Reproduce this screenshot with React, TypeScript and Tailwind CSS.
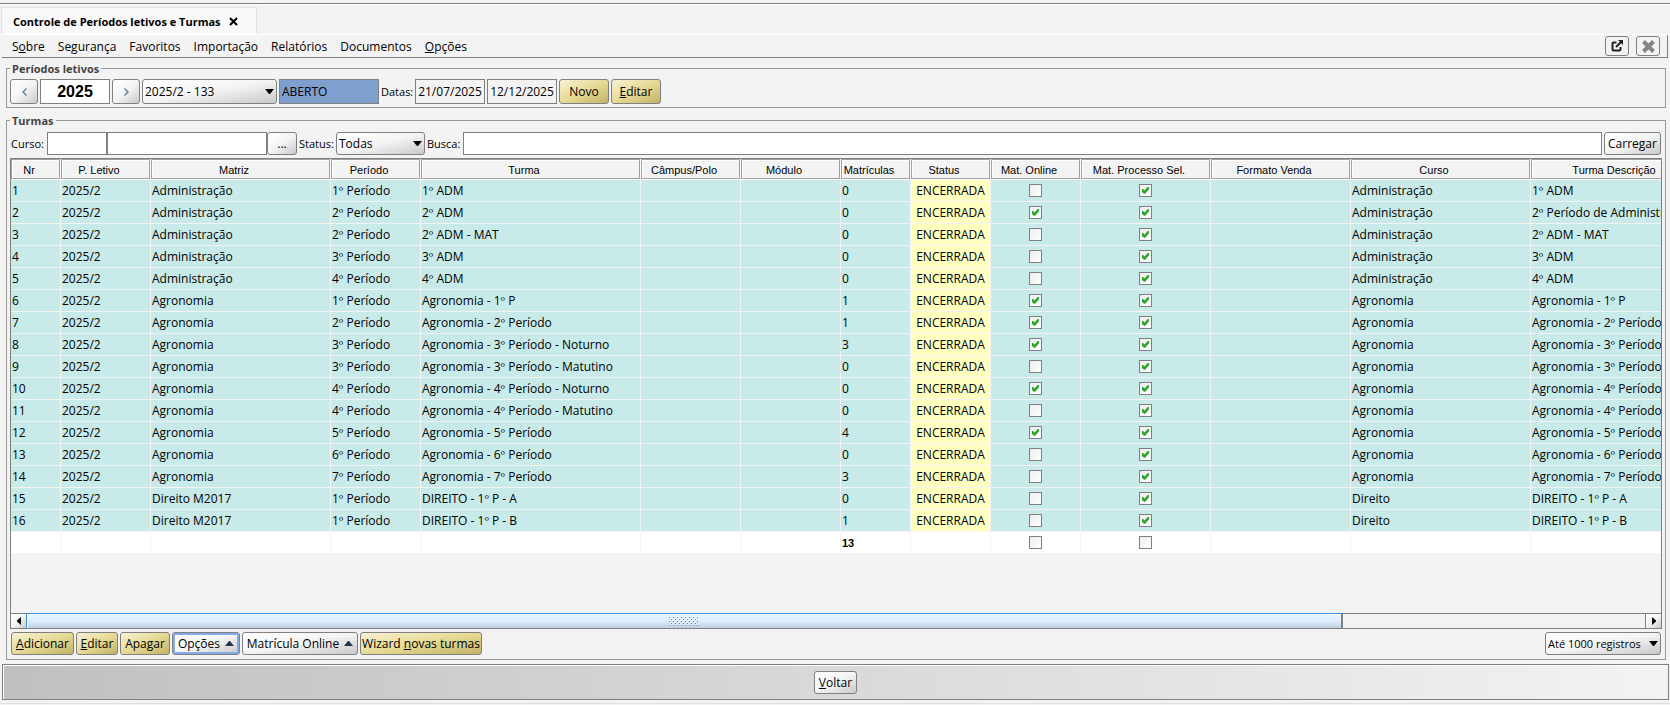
import type { ReactNode } from "react";

const MENU: [string, string, string][] = [
  ["S", "o", "bre"],
  ["Segurança", "", ""],
  ["Favoritos", "", ""],
  ["Importação", "", ""],
  ["Relatórios", "", ""],
  ["Documentos", "", ""],
  ["", "O", "pções"],
];

const COLUMNS: { name: string; width: number }[] = [
  { name: "Nr", width: 50 },
  { name: "P. Letivo", width: 90 },
  { name: "Matriz", width: 180 },
  { name: "Período", width: 90 },
  { name: "Turma", width: 220 },
  { name: "Câmpus/Polo", width: 100 },
  { name: "Módulo", width: 100 },
  { name: "Matrículas", width: 70 },
  { name: "Status", width: 80 },
  { name: "Mat. Online", width: 90 },
  { name: "Mat. Processo Sel.", width: 130 },
  { name: "Formato Venda", width: 140 },
  { name: "Curso", width: 180 },
  { name: "Turma Descrição", width: 180 },
];

type Turma = {
  matriz: string;
  periodo: string;
  turma: string;
  matriculas: number;
  online: boolean;
  curso: string;
  descricao: string;
};

const turma = (
  matriz: string,
  periodo: number,
  nome: string,
  matriculas: number,
  online: boolean,
  curso: string = matriz,
  descricao: string = nome,
): Turma => ({ matriz, periodo: `${periodo}º Período`, turma: nome, matriculas, online, curso, descricao });

const TURMAS: Turma[] = [
  turma("Administração", 1, "1º ADM", 0, false),
  turma("Administração", 2, "2º ADM", 0, true, "Administração", "2º Período de Administra"),
  turma("Administração", 2, "2º ADM - MAT", 0, false),
  turma("Administração", 3, "3º ADM", 0, false),
  turma("Administração", 4, "4º ADM", 0, false),
  turma("Agronomia", 1, "Agronomia - 1º P", 1, true),
  turma("Agronomia", 2, "Agronomia - 2º Período", 1, true),
  turma("Agronomia", 3, "Agronomia - 3º Período - Noturno", 3, true, "Agronomia", "Agronomia - 3º Período"),
  turma("Agronomia", 3, "Agronomia - 3º Período - Matutino", 0, false, "Agronomia", "Agronomia - 3º Período"),
  turma("Agronomia", 4, "Agronomia - 4º Período - Noturno", 0, true, "Agronomia", "Agronomia - 4º Período"),
  turma("Agronomia", 4, "Agronomia - 4º Período - Matutino", 0, false, "Agronomia", "Agronomia - 4º Período"),
  turma("Agronomia", 5, "Agronomia - 5º Período", 4, true),
  turma("Agronomia", 6, "Agronomia - 6º Período", 0, false),
  turma("Agronomia", 7, "Agronomia - 7º Período", 3, false),
  turma("Direito M2017", 1, "DIREITO - 1º P - A", 0, false, "Direito"),
  turma("Direito M2017", 1, "DIREITO - 1º P - B", 1, false, "Direito"),
];

const SILVER = "bg-linear-to-br from-white via-[#f4f4f4] to-[#c9c9c9]";
const GOLD = "bg-linear-to-br from-[#f8f2d4] via-[#e6da94] to-[#c2b266]";
const BUTTON = "flex shrink-0 items-center justify-center gap-1 rounded-[3px] border border-[#808080] whitespace-nowrap";
const FIELD = "min-w-0 border border-[#808080] outline-none";

function Button({ className, gold, children, label }: { className: string; gold?: boolean; children: ReactNode; label?: string }) {
  return (
    <button type="button" aria-label={label} className={`${BUTTON} ${gold ? GOLD : SILVER} ${className}`}>
      {children}
    </button>
  );
}

function Select({ label, value, className }: { label: string; value: string; className: string }) {
  return (
    <div className={`relative shrink-0 ${className}`}>
      <select aria-label={label} className={`h-full w-full appearance-none rounded-[3px] border border-[#808080] pl-[2px] outline-none ${SILVER}`}>
        <option>{value}</option>
      </select>
      <svg className="pointer-events-none absolute inset-y-0 right-[3px] my-auto" width="9" height="5" viewBox="0 0 9 5" aria-hidden="true">
        <path d="M0 0h9L5 5H4z" fill="#000" />
      </svg>
    </div>
  );
}

function UpArrow() {
  return (
    <svg width="9" height="5" viewBox="0 0 9 5" className="ml-px" aria-hidden="true">
      <path d="M4 0h1l4 5H0z" fill="#1f3550" />
    </svg>
  );
}

function Check({ label, checked }: { label: string; checked: boolean }) {
  return (
    <span className="relative mx-auto block h-[13px] w-[13px]">
      <input
        type="checkbox"
        aria-label={label}
        defaultChecked={checked}
        className="peer block h-full w-full appearance-none border border-[#808080] bg-linear-to-br from-[#ededed] to-white"
      />
      <svg className="pointer-events-none absolute inset-0 hidden peer-checked:block" width="13" height="13" viewBox="0 0 13 13" aria-hidden="true">
        <path d="M3 5h1.200L5.500 6.500 8.700 3H10v2.300L6.200 9.800H5L3 8z" fill="#2ea52e" />
      </svg>
    </span>
  );
}

function Cell({ children, tone = "bg-[#c8ebea]" }: { children?: ReactNode; tone?: string }) {
  return <td className={`overflow-hidden border-r border-b border-[#f3f3f3] px-px whitespace-nowrap ${tone}`}>{children}</td>;
}

function TurmasTable() {
  return (
    <table className="w-[1700px] table-fixed border-separate border-spacing-0">
      <colgroup>
        {COLUMNS.map((c) => (
          <col key={c.name} style={{ width: c.width }} />
        ))}
      </colgroup>
      <thead>
        <tr className="h-[21px]">
          {COLUMNS.map((c) => (
            <th key={c.name} scope="col" className="border-r border-b border-white p-0 font-['Liberation_Sans',Arial,sans-serif] text-[11px] font-normal">
              <div className="h-5 overflow-hidden border border-[#a0a0a0] pr-[14px] pl-px leading-[20px] whitespace-nowrap shadow-[inset_1px_1px_0_#fff]">{c.name}</div>
            </th>
          ))}
        </tr>
      </thead>
      <tbody>
        {TURMAS.map((t, i) => (
          <tr key={i} className="h-[22px]">
            <Cell>{i + 1}</Cell>
            <Cell>2025/2</Cell>
            <Cell>{t.matriz}</Cell>
            <Cell>{t.periodo}</Cell>
            <Cell>{t.turma}</Cell>
            <Cell />
            <Cell />
            <Cell>{t.matriculas}</Cell>
            <Cell tone="bg-[#ffffc0] text-center">ENCERRADA</Cell>
            <Cell>
              <Check label={`Mat. Online ${i + 1}`} checked={t.online} />
            </Cell>
            <Cell>
              <Check label={`Mat. Processo Sel. ${i + 1}`} checked />
            </Cell>
            <Cell />
            <Cell>{t.curso}</Cell>
            <Cell>{t.descricao}</Cell>
          </tr>
        ))}
        <tr className="h-[22px]">
          {COLUMNS.map((c) => (
            <Cell key={c.name} tone="bg-white">
              {c.name === "Matrículas" && <b className="font-['Liberation_Sans',Arial,sans-serif] text-[11px]">13</b>}
              {c.name.startsWith("Mat. ") && <Check label={`${c.name} total`} checked={false} />}
            </Cell>
          ))}
        </tr>
      </tbody>
    </table>
  );
}

function ScrollBar() {
  return (
    <div className="flex h-[15px] border-t border-[#808080]">
      <button type="button" aria-label="Rolar para a esquerda" className={`flex w-[15px] items-center justify-center ${SILVER}`}>
        <svg width="4" height="8" viewBox="0 0 4 8" aria-hidden="true">
          <path d="M4 0v8L0 4.500v-1z" fill="#000" />
        </svg>
      </button>
      <div className="-mt-px flex grow-[1317] basis-0 items-center justify-center border border-b-0 border-[#3d8ee0] bg-linear-to-b from-[#eaf5ff] via-[#deeeff] to-[#bcd0e2] shadow-[inset_1px_1px_0_#fff]">
        <svg width="30" height="10" aria-hidden="true">
          <defs>
            <pattern id="grip" width="4" height="4" patternUnits="userSpaceOnUse">
              <path d="M0 1h1v1H0zM2 3h1v1H2z" fill="#3d8ee0" />
              <path d="M0 0h1v1H0zM2 2h1v1H2z" fill="#fff" />
            </pattern>
          </defs>
          <rect width="30" height="10" fill="url(#grip)" />
        </svg>
      </div>
      <div className="grow-[303] basis-0 border-l border-[#808080]" />
      <button type="button" aria-label="Rolar para a direita" className={`flex w-4 items-center justify-center border-l border-[#808080] ${SILVER}`}>
        <svg width="4" height="8" viewBox="0 0 4 8" aria-hidden="true">
          <path d="M0 0v8l4-3.500v-1z" fill="#000" />
        </svg>
      </button>
    </div>
  );
}

function Group({ title, className, children }: { title: string; className: string; children: ReactNode }) {
  return (
    <section aria-label={title} className={`flex min-w-0 flex-col border border-[#999] px-[3px] ${className}`}>
      <h2 className="-mt-2 w-fit bg-[#f3f3f3] px-[2px] text-[11px] font-bold text-[#444]">{title}</h2>
      {children}
    </section>
  );
}

export default function App() {
  return (
    <div className="flex min-h-screen flex-col bg-[#f3f3f3] font-['Open_Sans','Noto_Sans',sans-serif] text-[12px] leading-4 text-black">
      <div className="h-1 border-b border-[#808080]" />
      <div className="flex h-[31px] items-end border-t border-b border-white px-px">
        <div className="flex h-[27px] w-[256px] items-center gap-2 border border-b-0 border-[#e4e4e4] bg-[#f9f9f9] pt-px pl-[11px] text-[11px] font-bold whitespace-nowrap">
          Controle de Períodos letivos e Turmas
          <button type="button" aria-label="Fechar aba">
            <svg width="9" height="9" viewBox="0 0 9 9" aria-hidden="true">
              <path d="M1 1l7 7M8 1L1 8" stroke="#000" strokeWidth="2" />
            </svg>
          </button>
        </div>
      </div>

      <div className="mx-[2px] flex h-[23px] items-center border-r border-b border-[#808080] pr-[7px]">
        <nav className="flex grow gap-[13px] pt-[2px] pl-[10px]">
          {MENU.map(([a, u, b]) => (
            <button type="button" key={a + u + b}>
              {a}
              <u>{u}</u>
              {b}
            </button>
          ))}
        </nav>
        <div className="flex gap-[7px]">
          <button type="button" aria-label="Abrir em janela" className="flex h-5 w-6 items-center justify-center rounded-[3px] border border-[#808080]">
            <svg width="12" height="12" viewBox="0 0 12 12" fill="none" stroke="#222" aria-hidden="true">
              <path d="M5.500 2.500H2.500q-1 0-1 1v6q0 1 1 1h6q1 0 1-1V7" strokeWidth="2" />
              <path d="M5 7l5-5" strokeWidth="2" />
              <path d="M7 0h5v5z" fill="#222" stroke="none" />
            </svg>
          </button>
          <button type="button" aria-label="Fechar" className="flex h-5 w-6 items-center justify-center rounded-[3px] border border-[#808080]">
            <svg width="13" height="13" viewBox="0 0 13 13" aria-hidden="true">
              <path d="M1.500 1.500l10 10M11.500 1.500l-10 10" stroke="#858585" strokeWidth="4" />
            </svg>
          </button>
        </div>
      </div>

      <main className="flex grow flex-col gap-3 pt-[10px] pr-1 pb-1 pl-[6px]">
        <Group title="Períodos letivos" className="gap-[2px] pb-[3px]">
          <div className="flex h-[25px] items-center gap-[2px] *:h-full">
            <Button className="w-7" label="Período anterior">
              <svg width="5" height="8" viewBox="0 0 5 8" fill="none" stroke="#5f7d90" strokeWidth="1.400" aria-hidden="true">
                <path d="M4.500 .5L1 4l3.500 3.500" />
              </svg>
            </Button>
            <input aria-label="Ano" defaultValue="2025" className={`${FIELD} w-[70px] bg-white text-center font-['Liberation_Sans',Arial,sans-serif] text-[16px] font-bold`} />
            <Button className="w-7" label="Próximo período">
              <svg width="5" height="8" viewBox="0 0 5 8" fill="none" stroke="#5f7d90" strokeWidth="1.400" aria-hidden="true">
                <path d="M.5 .5L4 4 .5 7.500" />
              </svg>
            </Button>
            <Select label="Período letivo" value="2025/2 - 133" className="w-[135px]" />
            <input aria-label="Situação" readOnly defaultValue="ABERTO" className={`${FIELD} w-[100px] bg-[#7f9fcf] pl-[2px]`} />
            <label htmlFor="inicio" className="flex w-8 items-center text-[11px]">
              Datas:
            </label>
            <input id="inicio" readOnly defaultValue="21/07/2025" className={`${FIELD} w-[70px] text-center`} />
            <input aria-label="Data final" readOnly defaultValue="12/12/2025" className={`${FIELD} w-[70px] text-center`} />
            <Button gold className="w-[50px]">
              Novo
            </Button>
            <Button gold className="w-[50px]">
              <span>
                <u>E</u>ditar
              </span>
            </Button>
          </div>
        </Group>

        <Group title="Turmas" className="grow gap-[3px] pb-1">
          <div className="flex h-[23px] *:h-full">
            <label htmlFor="curso" className="flex w-[37px] shrink-0 items-center pl-px text-[11px]">
              Curso:
            </label>
            <input id="curso" className={`${FIELD} w-[60px] bg-white px-1`} />
            <input aria-label="Nome do curso" className={`${FIELD} w-[160px] bg-white px-1`} />
            <Button className="w-[30px]" label="Procurar curso">
              ...
            </Button>
            <span className="flex w-[39px] shrink-0 items-center pl-[2px] text-[11px]">Status:</span>
            <Select label="Status" value="Todas" className="w-[89px]" />
            <label htmlFor="busca" className="flex w-[38px] shrink-0 items-center pl-[2px] text-[11px]">
              Busca:
            </label>
            <input id="busca" className={`${FIELD} grow bg-white px-1`} />
            <Button className="mr-px ml-[2px] w-[57px]">Carregar</Button>
          </div>

          <div className="flex grow flex-col border border-[#808080]">
            <div className="grow overflow-hidden">
              <TurmasTable />
            </div>
            <ScrollBar />
          </div>

          <div className="mr-px ml-px flex h-[23px] gap-[2px] *:h-full">
            <Button gold className="w-[63px]">
              <span>
                <u>A</u>dicionar
              </span>
            </Button>
            <Button gold className="w-[42px]">
              <span>
                <u>E</u>ditar
              </span>
            </Button>
            <Button gold className="w-[50px]">
              <span>
                Apa<u>g</u>ar
              </span>
            </Button>
            <Button className="w-[68px] shadow-[inset_0_0_0_2px_#86aae6]">
              Opções <UpArrow />
            </Button>
            <Button className="w-[116px]">
              Matrícula Online <UpArrow />
            </Button>
            <Button gold className="w-[122px]">
              <span>
                Wizard <u>n</u>ovas turmas
              </span>
            </Button>
            <div className="grow" />
            <Select label="Limite de registros" value="Até 1000 registros" className="w-[116px] text-[11px]" />
          </div>
        </Group>
      </main>

      <footer className="mr-px ml-[2px] flex h-9 items-end justify-center border border-[#808080] bg-linear-to-r from-[#c0c0c0] to-[#f3f3f3] pb-[5px] shadow-[inset_1px_1px_0_#fff]">
        <Button className="h-[23px] w-[43px]">
          <span>
            <u>V</u>oltar
          </span>
        </Button>
      </footer>
      <div className="mb-px h-1 border-b border-[#e0e0e0]" />
    </div>
  );
}
